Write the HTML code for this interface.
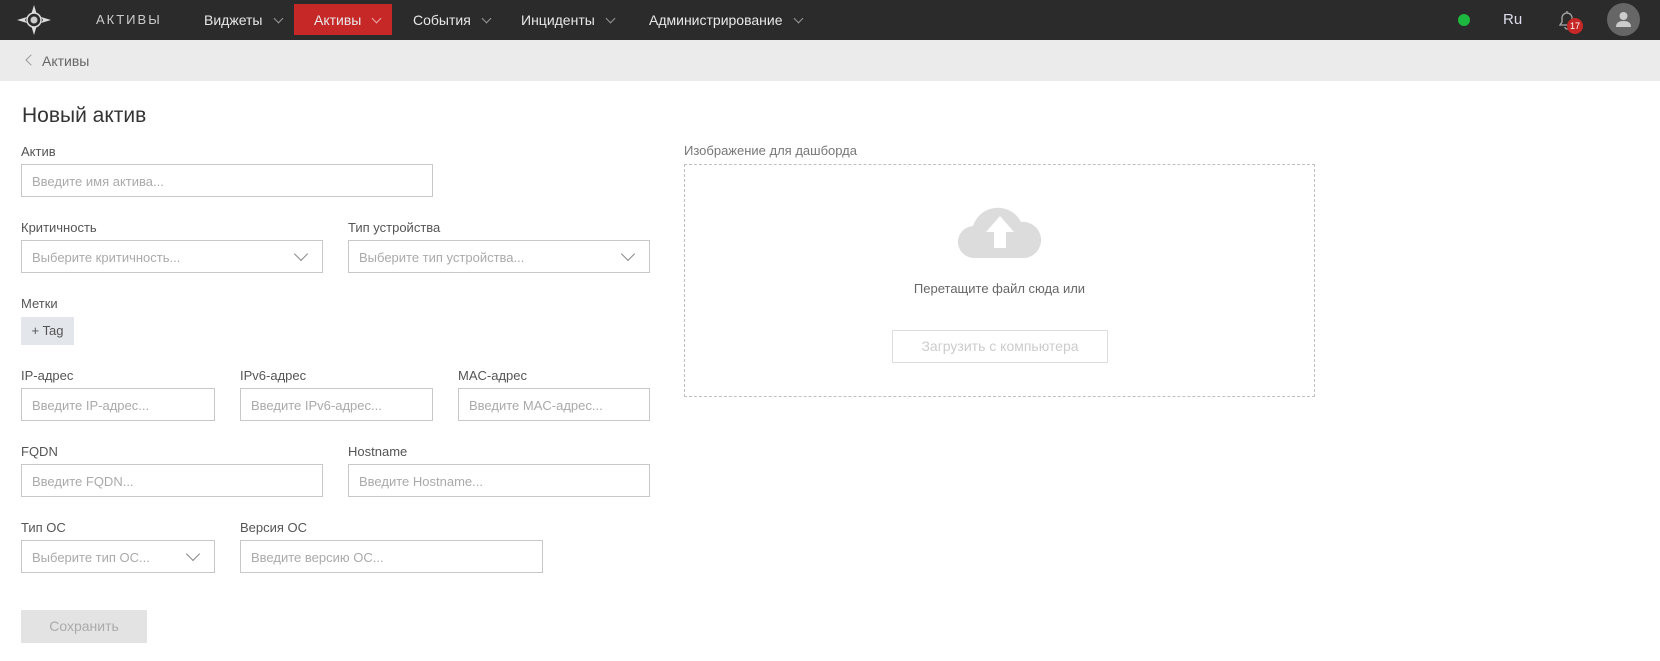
<!DOCTYPE html>
<html><head><meta charset="utf-8"><style>
*{box-sizing:border-box;margin:0;padding:0}
body{width:1660px;height:661px;background:#fff;font-family:"Liberation Sans","DejaVu Sans",sans-serif;position:relative;overflow:hidden;color:#333}
.a{position:absolute}
.nav{left:0;top:0;width:1660px;height:40px;background:#2b2b2b}
.ni{color:#e8e8e8;font-size:14px;top:12px}
.chev{display:inline-block;width:7px;height:7px;border-right:1px solid #999;border-bottom:1px solid #999;transform:rotate(45deg);margin-left:12px;position:relative;top:-3px}
.bc{left:0;top:40px;width:1660px;height:41px;background:#ebebeb}
.lbl{font-size:13px;color:#555}
.in{border:1px solid #c8c8c8;height:33px;font-size:13px;color:#aaa;padding:9px 10px;background:#fff}
.sel .c{position:absolute;right:16px;top:8px;width:10px;height:10px;border-right:1px solid #888;border-bottom:1px solid #888;transform:rotate(45deg)}
</style></head><body>
<div class="a nav"></div>
<svg class="a" style="left:17px;top:5px" width="34" height="30" viewBox="0 0 34 30">
<polygon points="17,0 20,10 17,8 14,10" fill="#ddd"/><polygon points="17,30 20,20 17,22 14,20" fill="#ddd"/>
<polygon points="0,15 10,12 8,15 10,18" fill="#ddd"/><polygon points="34,15 24,12 26,15 24,18" fill="#ddd"/>
<circle cx="17" cy="15" r="7" fill="#2b2b2b" stroke="#ddd" stroke-width="1.5"/><circle cx="17" cy="15" r="3.5" fill="#ccc"/></svg>
<div class="a ni" style="left:96px;letter-spacing:2px;font-size:13px;color:#ccc">АКТИВЫ</div>
<div class="a ni" style="left:204px">Виджеты<span class="chev"></span></div>
<div class="a" style="left:294px;top:4px;width:98px;height:31px;background:#c62828"></div>
<div class="a ni" style="left:314px">Активы<span class="chev" style="border-color:#eaa"></span></div>
<div class="a ni" style="left:413px">События<span class="chev"></span></div>
<div class="a ni" style="left:521px">Инциденты<span class="chev"></span></div>
<div class="a ni" style="left:649px">Администрирование<span class="chev"></span></div>
<div class="a" style="left:1458px;top:14px;width:12px;height:12px;border-radius:50%;background:#1db83f"></div>
<div class="a ni" style="left:1503px;font-size:15px;top:11px;color:#dde">Ru</div>
<svg class="a" style="left:1556px;top:9px" width="22" height="22" viewBox="0 0 22 22"><path d="M4 16 L6 13 V9 A5 5 0 0 1 16 9 V13 L18 16 Z M9 18 A2 2 0 0 0 13 18" fill="none" stroke="#aaa" stroke-width="1.3"/><path d="M11 2 V4" stroke="#aaa" stroke-width="1.3"/></svg>
<div class="a" style="left:1567px;top:18px;width:16px;height:16px;border-radius:50%;background:#c62828;color:#fff;font-size:9px;text-align:center;line-height:16px">17</div>
<div class="a" style="left:1607px;top:3px;width:33px;height:33px;border-radius:50%;background:#666"></div>
<svg class="a" style="left:1613px;top:9px" width="21" height="21" viewBox="0 0 21 21"><circle cx="10.5" cy="7" r="4" fill="#ccc"/><path d="M3 18 Q3 12 10.5 12 Q18 12 18 18 Z" fill="#ccc"/></svg>
<div class="a bc"></div>
<div class="a" style="left:27px;top:56px;width:8px;height:8px;border-left:1px solid #999;border-bottom:1px solid #999;transform:rotate(45deg)"></div>
<div class="a" style="left:42px;top:53px;font-size:14px;color:#666">Активы</div>
<div class="a" style="left:22px;top:104px;font-size:21px;color:#333">Новый актив</div>

<div class="a lbl" style="left:21px;top:144px">Актив</div>
<div class="a in" style="left:21px;top:164px;width:412px">Введите имя актива...</div>
<div class="a lbl" style="left:21px;top:220px">Критичность</div>
<div class="a in sel" style="left:21px;top:240px;width:302px">Выберите критичность...<span class="c"></span></div>
<div class="a lbl" style="left:348px;top:220px">Тип устройства</div>
<div class="a in sel" style="left:348px;top:240px;width:302px">Выберите тип устройства...<span class="c"></span></div>
<div class="a lbl" style="left:21px;top:296px">Метки</div>
<div class="a" style="left:21px;top:317px;width:53px;height:28px;background:#e3e6ea;font-size:13px;color:#555;text-align:center;line-height:28px">+ Tag</div>
<div class="a lbl" style="left:21px;top:368px">IP-адрес</div>
<div class="a in" style="left:21px;top:388px;width:194px">Введите IP-адрес...</div>
<div class="a lbl" style="left:240px;top:368px">IPv6-адрес</div>
<div class="a in" style="left:240px;top:388px;width:193px">Введите IPv6-адрес...</div>
<div class="a lbl" style="left:458px;top:368px">MAC-адрес</div>
<div class="a in" style="left:458px;top:388px;width:192px">Введите MAC-адрес...</div>
<div class="a lbl" style="left:21px;top:444px">FQDN</div>
<div class="a in" style="left:21px;top:464px;width:302px">Введите FQDN...</div>
<div class="a lbl" style="left:348px;top:444px">Hostname</div>
<div class="a in" style="left:348px;top:464px;width:302px">Введите Hostname...</div>
<div class="a lbl" style="left:21px;top:520px">Тип ОС</div>
<div class="a in sel" style="left:21px;top:540px;width:194px">Выберите тип ОС...<span class="c"></span></div>
<div class="a lbl" style="left:240px;top:520px">Версия ОС</div>
<div class="a in" style="left:240px;top:540px;width:303px">Введите версию ОС...</div>
<div class="a" style="left:21px;top:610px;width:126px;height:33px;background:#e3e3e3;color:#aaa;font-size:14px;text-align:center;line-height:33px">Сохранить</div>

<div class="a lbl" style="left:684px;top:143px;color:#777">Изображение для дашборда</div>
<div class="a" style="left:684px;top:164px;width:631px;height:233px;border:1px dashed #c0c0c0"></div>
<svg class="a" style="left:957px;top:204px" width="86" height="54" viewBox="0 0 86 54">
<path d="M18 54 A16 16 0 0 1 16 22 A26 26 0 0 1 64 18 A18 18 0 0 1 68 54 Z" fill="#dcdcdc"/>
<path d="M43 12 L57 28 H49 V44 H37 V28 H29 Z" fill="#fff"/></svg>
<div class="a" style="left:684px;top:281px;width:631px;text-align:center;font-size:13px;color:#666">Перетащите файл сюда или</div>
<div class="a" style="left:892px;top:330px;width:216px;height:33px;border:1px solid #ddd;text-align:center;line-height:31px;font-size:14px;color:#ccc">Загрузить с компьютера</div>
</body></html>
